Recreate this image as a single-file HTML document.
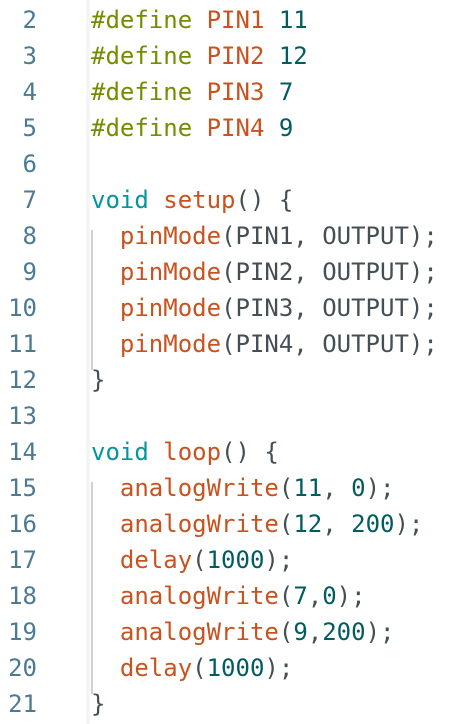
<!DOCTYPE html>
<html><head><meta charset="utf-8"><style>
html,body{margin:0;padding:0;background:#fff;width:456px;height:724px;overflow:hidden}
.strip{position:absolute;left:86px;top:0;width:4px;height:724px;background:#f4f6f6}
.guide{position:absolute;left:91px;width:2px;background:#d0d0d0}
.l{position:absolute;left:0;width:456px;height:36px;line-height:36px;font-family:"DejaVu Sans Mono","Liberation Mono",monospace;font-size:24px;color:#434f54;white-space:pre}
.n{position:absolute;left:0;width:37px;color:#4a7b93;text-align:right}
.c{position:absolute;left:91px}
.p{color:#728e00}.f{color:#c9531f}.k{color:#00979d}.v{color:#005c5f}
</style></head><body>
<div class="strip"></div>
<div class="guide" style="top:230px;height:140px"></div>
<div class="guide" style="top:482px;height:212px"></div>
<div class="l" style="top:2px"><span class="n">2</span><span class="c"><span class="p">#define</span> <span class="f">PIN1</span> <span class="v">11</span></span></div>
<div class="l" style="top:38px"><span class="n">3</span><span class="c"><span class="p">#define</span> <span class="f">PIN2</span> <span class="v">12</span></span></div>
<div class="l" style="top:74px"><span class="n">4</span><span class="c"><span class="p">#define</span> <span class="f">PIN3</span> <span class="v">7</span></span></div>
<div class="l" style="top:110px"><span class="n">5</span><span class="c"><span class="p">#define</span> <span class="f">PIN4</span> <span class="v">9</span></span></div>
<div class="l" style="top:146px"><span class="n">6</span></div>
<div class="l" style="top:182px"><span class="n">7</span><span class="c"><span class="k">void</span> <span class="f">setup</span>() {</span></div>
<div class="l" style="top:218px"><span class="n">8</span><span class="c">  <span class="f">pinMode</span>(PIN1, OUTPUT);</span></div>
<div class="l" style="top:254px"><span class="n">9</span><span class="c">  <span class="f">pinMode</span>(PIN2, OUTPUT);</span></div>
<div class="l" style="top:290px"><span class="n">10</span><span class="c">  <span class="f">pinMode</span>(PIN3, OUTPUT);</span></div>
<div class="l" style="top:326px"><span class="n">11</span><span class="c">  <span class="f">pinMode</span>(PIN4, OUTPUT);</span></div>
<div class="l" style="top:362px"><span class="n">12</span><span class="c">}</span></div>
<div class="l" style="top:398px"><span class="n">13</span></div>
<div class="l" style="top:434px"><span class="n">14</span><span class="c"><span class="k">void</span> <span class="f">loop</span>() {</span></div>
<div class="l" style="top:470px"><span class="n">15</span><span class="c">  <span class="f">analogWrite</span>(<span class="v">11</span>, <span class="v">0</span>);</span></div>
<div class="l" style="top:506px"><span class="n">16</span><span class="c">  <span class="f">analogWrite</span>(<span class="v">12</span>, <span class="v">200</span>);</span></div>
<div class="l" style="top:542px"><span class="n">17</span><span class="c">  <span class="f">delay</span>(<span class="v">1000</span>);</span></div>
<div class="l" style="top:578px"><span class="n">18</span><span class="c">  <span class="f">analogWrite</span>(<span class="v">7</span>,<span class="v">0</span>);</span></div>
<div class="l" style="top:614px"><span class="n">19</span><span class="c">  <span class="f">analogWrite</span>(<span class="v">9</span>,<span class="v">200</span>);</span></div>
<div class="l" style="top:650px"><span class="n">20</span><span class="c">  <span class="f">delay</span>(<span class="v">1000</span>);</span></div>
<div class="l" style="top:686px"><span class="n">21</span><span class="c">}</span></div>
</body></html>
